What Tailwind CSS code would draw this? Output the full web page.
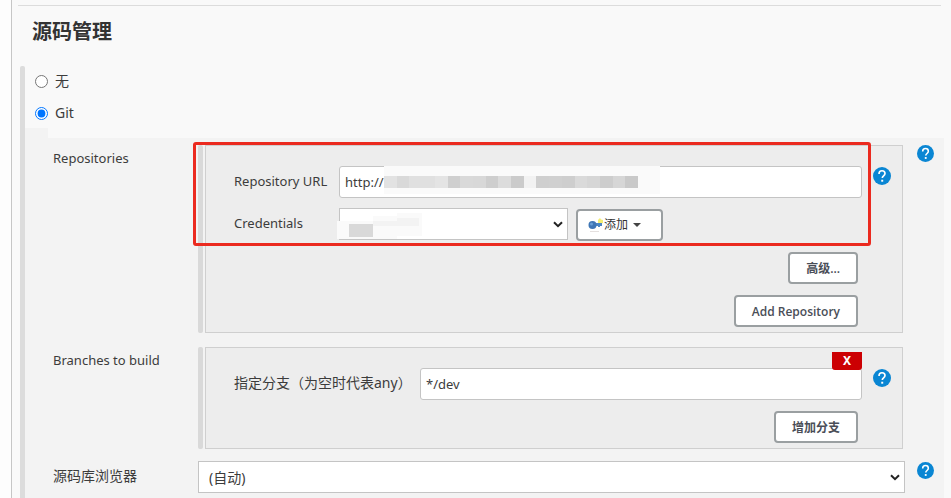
<!DOCTYPE html>
<html lang="zh-CN">
<head>
<meta charset="utf-8">
<title>源码管理</title>
<meta name="viewport" content="width=device-width, initial-scale=1">
<script src="https://cdn.jsdelivr.net/npm/@tailwindcss/browser@4"></script>
</head>
<body class="bg-[#fdfdfd] font-['Noto_Sans','Noto_Sans_CJK_SC',sans-serif] text-[13px] leading-5 text-[#3c3c3c]">
<svg class="hidden" aria-hidden="true">
  <symbol id="help" viewBox="0 0 24 24"><circle cx="12" cy="12" r="12" fill="#0a86d3"/><path d="M8 9.200C8 6.700 9.700 5 12 5s4 1.600 4 3.800c0 3-3.600 3.300-3.600 6" fill="none" stroke="#fff" stroke-width="2.200"/><rect x="11" y="17" width="2.600" height="2.600" fill="#fff"/></symbol>
  <symbol id="chevron" viewBox="0 0 10 7"><path d="M1 1.200 5 5.200 9 1.200" fill="none" stroke="#222" stroke-width="2"/></symbol>
</svg>
<main class="ml-[11px] flex min-h-screen flex-col border-l border-[#c6c6c6] bg-[#f9f9f9] pl-2 pt-[5px]">
  <div class="mr-[10px] ml-[-2px] border-t border-[#dcdcdc]"></div>
  <h2 class="ml-3 mt-3 text-[20px] leading-7 font-bold text-[#333]">源码管理</h2>
  <div class="mt-5 flex flex-1">
    <div class="w-[5px] shrink-0 rounded-t-xs bg-[#dcdcdc]"></div>
    <div class="flex min-w-0 flex-1 flex-col">
      <div class="ml-[10px] flex flex-col gap-3 pt-[5px]">
        <label class="flex items-center gap-[7px] text-[14px]"><input type="radio" name="scm" class="size-[13px]">无</label>
        <label class="flex items-center gap-[7px] text-[14px]"><input type="radio" name="scm" checked class="size-[13px]">Git</label>
      </div>
      <div class="mt-[5px] h-[10px] w-[23px] bg-[#f3f3f3]"></div>
      <div class="mr-[7px] flex flex-1 flex-col bg-[#f3f3f3] pl-7 pt-[7px]">

        <div class="flex">
          <div class="w-[145px] shrink-0 pt-[3px]">Repositories</div>
          <div class="relative mr-0.5 flex min-w-0 flex-1 gap-0.5">
            <div class="w-[5px] shrink-0 rounded-xs bg-[#d9d9d9]"></div>
            <div class="flex min-w-0 flex-1 flex-col border border-[#cfcfcf] bg-[#ededed] pt-5 pb-[5px] pl-7">
              <div class="flex">
                <label for="url" class="w-[105px] shrink-0 pt-[5px]">Repository URL</label>
                <div class="relative min-w-0 flex-1">
                  <input id="url" type="text" value="http://" class="h-8 w-full rounded-[3px] border border-[#c4c4c4] bg-white px-[5px]">
                  <div class="absolute left-[45px] top-0 flex h-7 w-[276px] items-center bg-[#fafafa]" aria-hidden="true">
                    <div class="mt-1 flex h-3 w-[254px]">
                      <i class="flex-1 bg-[#e2e2e2]"></i><i class="flex-1 bg-[#d9d9d9]"></i><i class="flex-1 bg-[#e0e0e0]"></i><i class="flex-1 bg-[#e0e0e0]"></i><i class="flex-1 bg-[#e4e4e4]"></i><i class="flex-1 bg-[#cfcfcf]"></i><i class="flex-1 bg-[#d9d9d9]"></i><i class="flex-1 bg-[#d8d8d8]"></i><i class="flex-1 bg-[#cecece]"></i><i class="flex-1 bg-[#dcdcdc]"></i><i class="flex-1 bg-[#cbcbcb]"></i><i class="flex-1 bg-[#f2f2f2]"></i><i class="flex-1 bg-[#cfcfcf]"></i><i class="flex-1 bg-[#d0d0d0]"></i><i class="flex-1 bg-[#cecece]"></i><i class="flex-1 bg-[#dadada]"></i><i class="flex-1 bg-[#d6d6d6]"></i><i class="flex-1 bg-[#cdcdcd]"></i><i class="flex-1 bg-[#d6d6d6]"></i><i class="flex-1 bg-[#c9c9c9]"></i>
                    </div>
                  </div>
                </div>
                <button class="mx-[11px] mt-px size-[18px] shrink-0" aria-label="Help: Repository URL"><svg class="size-full"><use href="#help"/></svg></button>
              </div>
              <div class="mt-[10px] flex">
                <label for="cred" class="w-[105px] shrink-0 pt-[5px]">Credentials</label>
                <div class="relative w-[229px]">
                  <select id="cred" class="h-8 w-full appearance-none border border-[#c4c4c4] bg-white"><option></option></select>
                  <svg class="pointer-events-none absolute right-[5px] top-[13px] h-[7px] w-[10px]"><use href="#chevron"/></svg>
                  <svg class="pointer-events-none absolute left-[-2px] top-1 h-7 w-[90px]" aria-hidden="true"><path d="M0 9H36V4H60V1H85V24H60V27H0Z" fill="#fafafa"/><path d="M12 12H36V25H12Z" fill="#d9d9d9"/><path d="M36 9H60V6H82V14H36Z" fill="#f3f3f3"/></svg>
                </div>
                <button class="ml-2 mt-px flex h-8 w-[87px] items-center rounded-[4px] border-2 border-[#9a9fa1] bg-white pl-[10px] text-[12px] text-[#333]">
                  <svg class="h-4 w-4" viewBox="0 0 16 16"><path d="M10 3l2-2 1 1.500 2 .5v3l-3 1-2-1Z" fill="#f4ee72"/><path d="M6 6h8v3h-2v1h-2V9H6Z" fill="#4c86c3"/><circle cx="4.500" cy="8" r="4" fill="#3f76b5"/><circle cx="3.500" cy="7" r="1.500" fill="#6a9fd6"/><path d="M2 14.500h9" stroke="#e5e0df"/></svg>添加
                  <svg class="ml-[5px] h-1 w-2" viewBox="0 0 8 4"><path d="M0 0h8L4 4Z" fill="#444"/></svg>
                </button>
              </div>
              <div class="mr-11 mt-[11px] flex flex-col items-end gap-[11px]">
                <button class="h-8 rounded-[4px] border-2 border-[#9a9fa1] bg-white px-4 pt-0.5 font-['Open_Sans','Noto_Sans_CJK_SC',sans-serif] text-[12px] font-semibold text-[#4a4e57]">高级...</button>
                <button class="h-8 rounded-[4px] border-2 border-[#9a9fa1] bg-white px-4 pt-0.5 font-['Open_Sans','Noto_Sans_CJK_SC',sans-serif] text-[12px] font-semibold text-[#4a4e57]">Add Repository</button>
              </div>
            </div>
            <div class="pointer-events-none absolute left-[-5px] right-8 top-[-3px] h-[104px] rounded-[3px] border-3 border-[#eb2a1f]"></div>
          </div>
          <button class="ml-3 mr-[10px] size-[17px] shrink-0" aria-label="Help: Repositories"><svg class="size-full"><use href="#help"/></svg></button>
        </div>

        <div class="mt-[14px] flex">
          <div class="w-[145px] shrink-0 pt-[3px]">Branches to build</div>
          <div class="mr-[41px] flex min-w-0 flex-1 gap-0.5">
            <div class="w-[5px] shrink-0 rounded-xs bg-[#d9d9d9]"></div>
            <div class="flex min-w-0 flex-1 flex-col border border-[#cfcfcf] bg-[#ededed] pt-5 pb-[5px] pl-7">
              <div class="flex">
                <label for="branch" class="w-[186px] shrink-0 whitespace-nowrap pt-[5px] text-[14px]">指定分支（为空时代表any）</label>
                <div class="relative min-w-0 flex-1">
                  <input id="branch" type="text" value="*/dev" class="h-8 w-full rounded-[3px] border border-[#c4c4c4] bg-white px-[5px]">
                  <button class="absolute right-0 top-[-16px] h-[18px] w-[30px] rounded-b-[3px] bg-[#cc0003] text-[12px] leading-[18px] font-bold text-white">X</button>
                </div>
                <button class="mx-[11px] mt-px size-[18px] shrink-0" aria-label="Help: branch"><svg class="size-full"><use href="#help"/></svg></button>
              </div>
              <div class="mr-11 mt-[11px] flex justify-end">
                <button class="h-8 rounded-[4px] border-2 border-[#9a9fa1] bg-white px-4 pt-0.5 font-['Open_Sans','Noto_Sans_CJK_SC',sans-serif] text-[12px] font-semibold text-[#4a4e57]">增加分支</button>
              </div>
            </div>
          </div>
        </div>

        <div class="mt-3 flex pb-1">
          <label for="browser" class="w-[145px] shrink-0 pt-[5px] text-[14px]">源码库浏览器</label>
          <div class="relative min-w-0 flex-1">
            <select id="browser" class="h-8 w-full appearance-none border border-[#c4c4c4] bg-white px-[10px] pt-0.5 text-[14px]"><option>(自动)</option></select>
            <svg class="pointer-events-none absolute right-[5px] top-[13px] h-[7px] w-[10px]"><use href="#chevron"/></svg>
          </div>
          <button class="mr-[10px] ml-3 mt-px size-[17px] shrink-0" aria-label="Help: 源码库浏览器"><svg class="size-full"><use href="#help"/></svg></button>
        </div>
      </div>
    </div>
  </div>
</main>
</body>
</html>
